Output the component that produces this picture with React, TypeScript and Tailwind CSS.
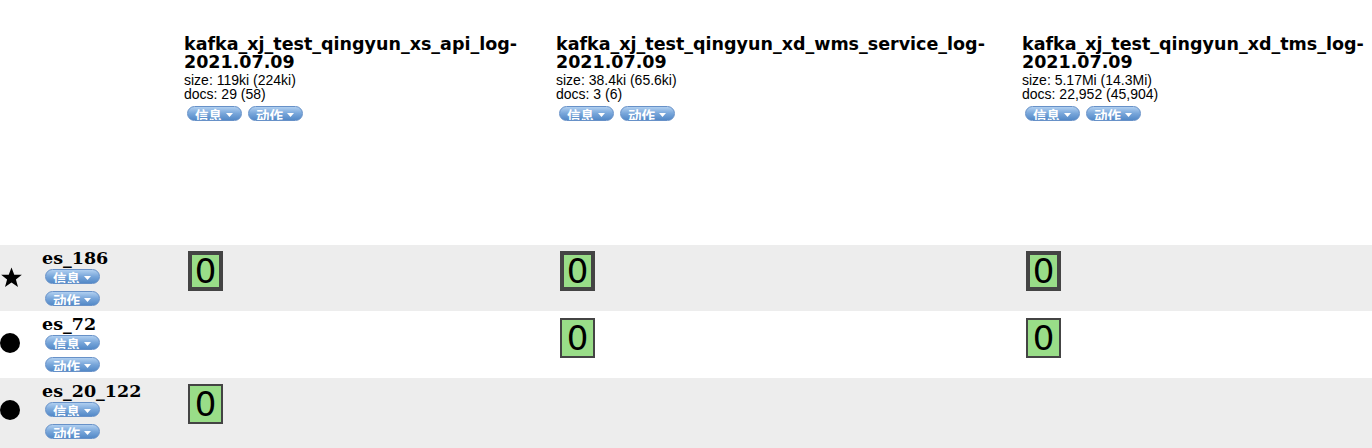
import React from "react";

const HF = { fontFamily: '"DejaVu Sans", Verdana, sans-serif' };
const SF = { fontFamily: '"Liberation Sans", Arial, sans-serif' };
const CJK = { fontFamily: '"Noto Sans CJK SC", "DejaVu Sans", sans-serif' };

function Btn({ label }: { label: string }) {
  return (
    <div className="flex h-[15px] w-[55px] items-start overflow-hidden rounded-full border border-[#6791c8] bg-gradient-to-b from-[#b0cff0] via-[#78a6da] to-[#5389c7] pl-[7px]">
      <span className="mt-[-1px] text-[13.5px] font-bold leading-[18px] text-white" style={CJK}>
        {label}
      </span>
      <svg width="7" height="4" viewBox="0 0 7 4" className="ml-[4px] mt-[6px]">
        <polygon points="0,0 7,0 3.5,4" fill="#ffffff" />
      </svg>
    </div>
  );
}

function IndexHeader({ name, size, docs }: { name: string; size: string; docs: string }) {
  return (
    <div className="pt-[35px]">
      <div className="whitespace-nowrap text-[17.5px] font-bold leading-[18px] text-black" style={HF}>
        <div>{name}</div>
        <div>2021.07.09</div>
      </div>
      <div className="mt-[2px] text-[14px] leading-[14px] text-black" style={SF}>
        size: {size}
      </div>
      <div className="text-[14px] leading-[14px] text-black" style={SF}>
        docs: {docs}
      </div>
      <div className="mt-[5px] flex gap-[6px] pl-[3px]">
        <Btn label="信息" />
        <Btn label="动作" />
      </div>
    </div>
  );
}

function Shard({ primary }: { primary?: boolean }) {
  return (
    <div
      className={
        "flex h-[40px] w-[35px] items-center justify-center bg-[#99dd88] text-[34px] leading-none text-black " +
        (primary ? "border-[4px] border-[#444444]" : "border-[2px] border-[#444444]")
      }
      style={HF}
    >
      0
    </div>
  );
}

function Star() {
  return (
    <svg width="23" height="23" viewBox="0 0 24 24">
      <polygon
        points="12,1.5 14.9,9 22.8,9.2 16.6,14.1 18.8,21.8 12,17.3 5.2,21.8 7.4,14.1 1.2,9.2 9.1,9"
        fill="#000"
      />
    </svg>
  );
}

function Dot() {
  return <div className="h-[20px] w-[20px] rounded-full bg-black" />;
}

function NodeCell({ name, star }: { name: string; star?: boolean }) {
  return (
    <div className="flex items-center">
      <div className="flex w-[42px] items-center">{star ? <Star /> : <Dot />}</div>
      <div className="flex flex-col">
        <div
          className="text-[17.5px] font-bold leading-[20px] text-black"
          style={{ fontFamily: '"DejaVu Serif", Georgia, serif' }}
        >
          {name}
        </div>
        <div className="mt-[1px] flex flex-col gap-[7px] pl-[3px]">
          <Btn label="信息" />
          <Btn label="动作" />
        </div>
      </div>
    </div>
  );
}

export default function App() {
  const cols = "grid grid-cols-[184px_372px_466px_400px]";
  return (
    <div className="h-[448px] w-[1372px] overflow-hidden bg-white">
      <div className={cols + " h-[245px]"}>
        <div />
        <IndexHeader name="kafka_xj_test_qingyun_xs_api_log-" size="119ki (224ki)" docs="29 (58)" />
        <IndexHeader name="kafka_xj_test_qingyun_xd_wms_service_log-" size="38.4ki (65.6ki)" docs="3 (6)" />
        <IndexHeader name="kafka_xj_test_qingyun_xd_tms_log-" size="5.17Mi (14.3Mi)" docs="22,952 (45,904)" />
      </div>
      <div className={cols + " h-[66px] bg-[#ededed]"}>
        <div className="pt-[3px]">
          <NodeCell name="es_186" star />
        </div>
        <div className="pl-[4px] pt-[6px]"><Shard primary /></div>
        <div className="pl-[4px] pt-[6px]"><Shard primary /></div>
        <div className="pl-[4px] pt-[6px]"><Shard primary /></div>
      </div>
      <div className={cols + " h-[67px] bg-white"}>
        <div className="pt-[3px]">
          <NodeCell name="es_72" />
        </div>
        <div />
        <div className="pl-[4px] pt-[7px]"><Shard /></div>
        <div className="pl-[4px] pt-[7px]"><Shard /></div>
      </div>
      <div className={cols + " h-[70px] bg-[#ededed]"}>
        <div className="pt-[3px]">
          <NodeCell name="es_20_122" />
        </div>
        <div className="pl-[4px] pt-[6px]"><Shard /></div>
        <div />
        <div />
      </div>
    </div>
  );
}
